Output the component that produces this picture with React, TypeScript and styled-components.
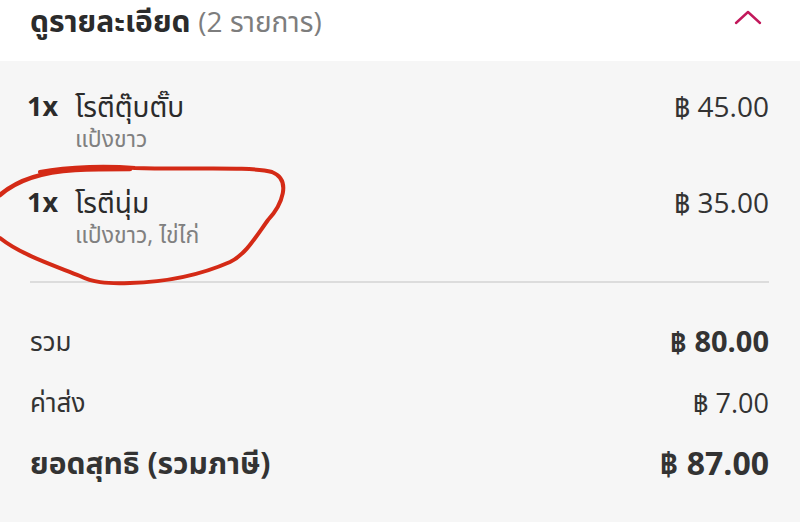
import React from "react";
import styled, { createGlobalStyle } from "styled-components";

const GlobalStyle = createGlobalStyle`
  html, body {
    margin: 0;
    padding: 0;
    background: #f6f6f6;
  }
  body {
    font-family: "Open Sans", Roboto, "Noto Sans", "Noto Sans Thai", sans-serif;
    color: #2b2b2b;
  }
`;

interface OrderItem {
  qty: number;
  name: string;
  options: string;
  price: string;
}

const items: OrderItem[] = [
  { qty: 1, name: "โรตีตุ๊บตั๊บ", options: "แป้งขาว", price: "45.00" },
  { qty: 1, name: "โรตีนุ่ม", options: "แป้งขาว, ไข่ไก่", price: "35.00" },
];

const ChevronUp = () => (
  <svg width="30" height="18" viewBox="0 0 30 18" fill="none">
    <path d="M3 15 L15 4 L27 15" stroke="#c2185b" strokeWidth="2.4" strokeLinecap="round" strokeLinejoin="round" />
  </svg>
);

// hand-drawn red mark over the second item
const Scribble = () => (
  <ScribbleSvg width="300" height="300" viewBox="0 0 300 300">
    <path
      d="M40 172 C70 166 110 166 135 168 C190 170 250 166 272 172 C292 180 282 205 268 220 C255 238 245 255 230 262 C205 273 170 282 130 283 C105 284 92 282 80 276 C50 264 20 254 0 238"
      stroke="#d42a16"
      strokeWidth="4"
      fill="none"
      strokeLinecap="round"
    />
    <path
      d="M0 195 C15 182 40 172 75 170 C95 169 115 169 130 169"
      stroke="#d42a16"
      strokeWidth="4.5"
      fill="none"
      strokeLinecap="round"
    />
  </ScribbleSvg>
);

export default function App() {
  return (
    <>
      <GlobalStyle />
      <Page>
        <Header>
          <HeaderTitle>
            ดูรายละเอียด <HeaderCount>(2 รายการ)</HeaderCount>
          </HeaderTitle>
          <ChevronUp />
        </Header>
        <Body>
          <ItemList>
            {items.map((it) => (
              <ItemRow key={it.name}>
                <Qty>{it.qty}x</Qty>
                <ItemInfo>
                  <ItemName>{it.name}</ItemName>
                  <ItemOptions>{it.options}</ItemOptions>
                </ItemInfo>
                <ItemPrice>฿ {it.price}</ItemPrice>
              </ItemRow>
            ))}
          </ItemList>
          <Divider />
          <Summary>
            <SummaryRow>
              <SummaryLabel>รวม</SummaryLabel>
              <SummaryValue $bold>฿ 80.00</SummaryValue>
            </SummaryRow>
            <SummaryRow>
              <SummaryLabel>ค่าส่ง</SummaryLabel>
              <SummaryValue>฿ 7.00</SummaryValue>
            </SummaryRow>
            <SummaryRow>
              <TotalLabel>ยอดสุทธิ (รวมภาษี)</TotalLabel>
              <TotalValue>฿ 87.00</TotalValue>
            </SummaryRow>
          </Summary>
        </Body>
        <Scribble />
      </Page>
    </>
  );
}

const Page = styled.div`
  position: relative;
  width: 800px;
  height: 522px;
  overflow: hidden;
  background: #f6f6f6;
`;

const Header = styled.div`
  height: 61px;
  background: #ffffff;
  display: flex;
  align-items: flex-start;
  justify-content: space-between;
  padding: 0 37px 0 30px;
  box-sizing: border-box;

  svg {
    margin-top: 8px;
  }
`;

const HeaderTitle = styled.div`
  font-size: 30px;
  font-weight: 700;
  line-height: 36px;
  margin-top: 3px;
  color: #2b2b2b;
`;

const HeaderCount = styled.span`
  font-weight: 400;
  font-size: 28px;
  color: #7d7d7d;
`;

const Body = styled.div`
  padding: 28px 31px 0 27px;
`;

const ItemList = styled.div`
  display: flex;
  flex-direction: column;
  gap: 32px;
`;

const ItemRow = styled.div`
  display: flex;
  align-items: flex-start;
`;

const Qty = styled.div`
  width: 48px;
  font-size: 27px;
  font-weight: 700;
  line-height: 34px;
  color: #2b2b2b;
`;

const ItemInfo = styled.div`
  flex: 1;
  display: flex;
  flex-direction: column;
`;

const ItemName = styled.div`
  font-size: 28px;
  line-height: 34px;
  color: #2b2b2b;
`;

const ItemOptions = styled.div`
  font-size: 23px;
  line-height: 30px;
  color: #808080;
`;

const ItemPrice = styled.div`
  font-size: 28px;
  line-height: 34px;
  color: #333333;
`;

const Divider = styled.div`
  height: 2px;
  background: #dcdcdc;
  margin: 32px 0 0 3px;
`;

const Summary = styled.div`
  display: flex;
  flex-direction: column;
  gap: 21px;
  padding-top: 40px;
  padding-left: 3px;
`;

const SummaryRow = styled.div`
  display: flex;
  justify-content: space-between;
  align-items: center;
  height: 40px;
`;

const SummaryLabel = styled.div`
  font-size: 26px;
  color: #333333;
`;

const SummaryValue = styled.div<{ $bold?: boolean }>`
  font-size: ${(p) => (p.$bold ? 29 : 27)}px;
  font-weight: ${(p) => (p.$bold ? 700 : 400)};
  color: #333333;
`;

const TotalLabel = styled.div`
  font-size: 30px;
  font-weight: 700;
  color: #333333;
`;

const TotalValue = styled.div`
  font-size: 32px;
  font-weight: 700;
  color: #333333;
`;

const ScribbleSvg = styled.svg`
  position: absolute;
  left: 0;
  top: 0;
  pointer-events: none;
`;
